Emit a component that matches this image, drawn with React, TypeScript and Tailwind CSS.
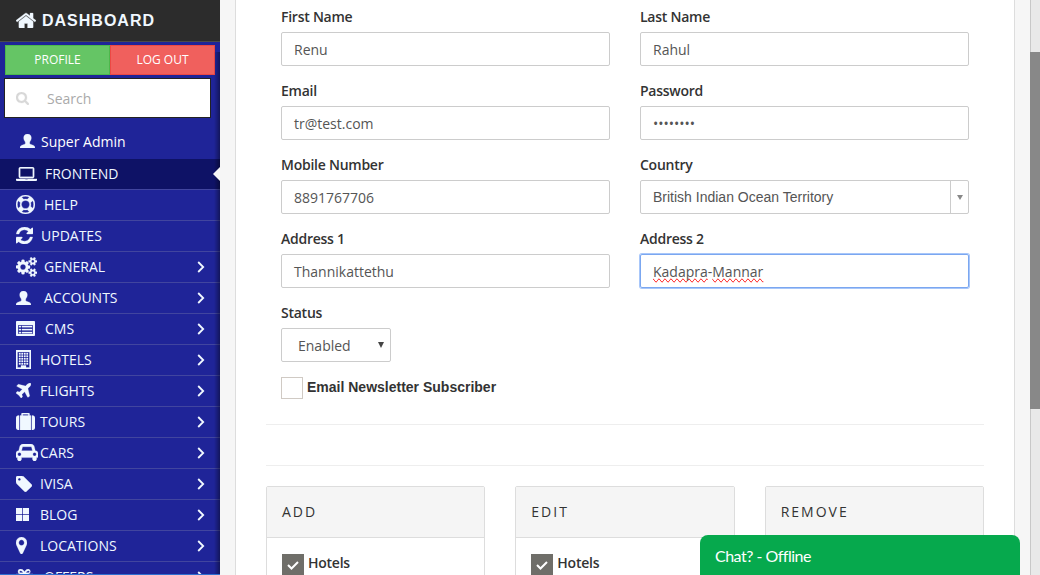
import type { ReactNode } from "react";

type Glyph = { box: string; w: number; h: number; d: string };

const glyphs: Record<string, Glyph> = {
  home: {
    box: "89 160 1614 1376", w: 20, h: 16,
    d: "M1472 992v480q0 26-19 45t-45 19h-384v-384h-256v384h-384q-26 0-45-19t-19-45v-480q0-1 .5-3t.5-3l575-474 575 474q1 2 1 6zm223-69l-62 74q-8 9-21 11h-3q-13 0-21-7l-692-577-692 577q-12 8-24 7-13-2-21-11l-62-74q-8-10-7-23.5t11-21.5l719-599q32-26 76-26t76 26l244 204v-195q0-14 9-23t23-9h192q14 0 23 9t9 23v408l219 182q10 8 11 21.5t-7 23.5z",
  },
  search: {
    box: "64 128 1664 1664", w: 13, h: 13,
    d: "M1216 832q0-185-131.5-316.5t-316.5-131.5-316.5 131.5-131.5 316.5 131.5 316.5 316.5 131.5 316.5-131.5 131.5-316.5zm512 832q0 52-38 90t-90 38q-54 0-90-38l-343-342q-179 124-399 124-143 0-273.5-55.5t-225-150-150-225-55.5-273.5 55.5-273.5 150-225 225-150 273.5-55.5 273.5 55.5 225 150 150 225 55.5 273.5q0 220-124 399l343 343q37 37 37 90z",
  },
  laptop: {
    box: "0 128 1920 1280", w: 21, h: 14,
    d: "M416 1152q-66 0-113-47t-47-113v-704q0-66 47-113t113-47h1088q66 0 113 47t47 113v704q0 66-47 113t-113 47h-1088zm-32-864v704q0 13 9.5 22.5t22.5 9.5h1088q13 0 22.5-9.5t9.5-22.5v-704q0-13-9.5-22.5t-22.5-9.5h-1088q-13 0-22.5 9.5t-9.5 22.5zm1376 928h160v96q0 40-47 68t-113 28h-1600q-66 0-113-28t-47-68v-96h1760zm-720 96q16 0 16-16t-16-16h-160q-16 0-16 16t16 16h160z",
  },
  ring: {
    box: "0 0 1792 1792", w: 19, h: 19,
    d: "M896 0q182 0 348 71t286 191 191 286 71 348-71 348-191 286-286 191-348 71-348-71-286-191-191-286-71-348 71-348 191-286 286-191 348-71zm0 128q-190 0-361 90l194 194q82-28 167-28t167 28l194-194q-171-90-361-90zm-678 1129l194-194q-28-82-28-167t28-167l-194-194q-90 171-90 361t90 361zm678 407q190 0 361-90l-194-194q-82 28-167 28t-167-28l-194 194q171 90 361 90zm0-384q159 0 271.5-112.5t112.5-271.5-112.5-271.5-271.5-112.5-271.5 112.5-112.5 271.5 112.5 271.5 271.5 112.5zm484-217l194 194q90-171 90-361t-90-361l-194 194q28 82 28 167t-28 167z",
  },
  refresh: {
    box: "128 128 1536 1536", w: 17, h: 17,
    d: "M1639 1056q0 5-1 7-64 268-268 434.5t-478 166.5q-146 0-282.5-55t-243.5-157l-129 129q-19 19-45 19t-45-19-19-45v-448q0-26 19-45t45-19h448q26 0 45 19t19 45-19 45l-137 137q71 66 161 102t187 36q134 0 250-65t186-179q11-17 53-117 8-23 30-23h192q13 0 22.5 9.5t9.5 22.5zm25-800v448q0 26-19 45t-45 19h-448q-26 0-45-19t-19-45 19-45l138-138q-148-137-349-137-134 0-250 65t-186 179q-11 17-53 117-8 23-30 23h-199q-13 0-22.5-9.5t-9.5-22.5v-7q65-268 270-434.5t480-166.5q146 0 284 55.5t245 156.5l130-129q19-19 45-19t45 19 19 45z",
  },
  cogs: {
    box: "0 0 1920 1792", w: 21, h: 20,
    d: "M896 896q0-106-75-181t-181-75-181 75-75 181 75 181 181 75 181-75 75-181zm768 512q0-52-38-90t-90-38-90 38-38 90q0 53 37.5 90.5t90.5 37.5 90.5-37.5 37.5-90.5zm0-1024q0-52-38-90t-90-38-90 38-38 90q0 53 37.5 90.5t90.5 37.5 90.5-37.5 37.5-90.5zm-384 421v185q0 10-7 19.5t-16 10.5l-155 24q-11 35-32 76 34 48 90 115 7 11 7 20 0 12-7 19-23 30-82.5 89.5t-78.5 59.5q-11 0-21-7l-115-90q-37 19-77 31-11 108-23 155-7 24-30 24h-186q-11 0-20-7.5t-10-17.5l-23-153q-34-10-75-31l-118 89q-7 7-20 7-11 0-21-8-144-133-144-160 0-9 7-19 10-14 41-53t47-61q-23-44-35-82l-152-24q-10-1-17-9.5t-7-19.5v-185q0-10 7-19.5t16-10.5l155-24q11-35 32-76-34-48-90-115-7-11-7-20 0-12 7-20 22-30 82-89t79-59q11 0 21 7l115 90q34-18 77-32 11-108 23-154 7-24 30-24h186q11 0 20 7.5t10 17.5l23 153q34 10 75 31l118-89q8-7 20-7 11 0 21 8 144 133 144 160 0 8-7 19-12 16-42 54t-45 60q23 48 34 82l152 23q10 2 17 10.5t7 19.5zm640 533v140q0 16-149 31-12 27-30 52 51 113 51 138 0 4-4 7-122 71-124 71-8 0-46-47t-52-68q-20 2-30 2t-30-2q-14 21-52 68t-46 47q-2 0-124-71-4-3-4-7 0-25 51-138-18-25-30-52-149-15-149-31v-140q0-16 149-31 13-29 30-52-51-113-51-138 0-4 4-7 4-2 35-20t59-34 30-16q8 0 46 46.5t52 67.5q20-2 30-2t30 2q51-71 92-112l6-2q4 0 124 70 4 3 4 7 0 25-51 138 17 23 30 52 149 15 149 31zm0-1024v140q0 16-149 31-12 27-30 52 51 113 51 138 0 4-4 7-122 71-124 71-8 0-46-47t-52-68q-20 2-30 2t-30-2q-14 21-52 68t-46 47q-2 0-124-71-4-3-4-7 0-25 51-138-18-25-30-52-149-15-149-31v-140q0-16 149-31 13-29 30-52-51-113-51-138 0-4 4-7 4-2 35-20t59-34 30-16q8 0 46 46.5t52 67.5q20-2 30-2t30 2q51-71 92-112l6-2q4 0 124 70 4 3 4 7 0 25-51 138 17 23 30 52 149 15 149 31z",
  },
  user: {
    box: "0 0 15 14", w: 15, h: 14,
    d: "M7.5 0C9.8 0 11.300 1.6 11.300 3.8C11.300 5.4 10.600 7 9.7 7.9V9.2C9.7 9.8 9.9 10 10.5 10.3L13.6 11.4C14.7 11.9 15 12.6 15 14H0C0 12.6 .3 11.900 1.4 11.4L4.5 10.3C5.1 10 5.3 9.8 5.3 9.2V7.9C4.4 7 3.7 5.4 3.7 3.8C3.7 1.6 5.2 0 7.5 0Z",
  },
  list: {
    box: "0 0 19 15", w: 19, h: 15,
    d: "M1 0H18Q19 0 19 1V14Q19 15 18 15H1Q0 15 0 14V1Q0 0 1 0ZM2 4V13H17V4ZM3 5H5V6.2H3ZM6 5H16V6.2H6ZM3 8H5V9.2H3ZM6 8H16V9.2H6ZM3 11H5V12.2H3ZM6 11H16V12.2H6Z",
  },
  hotel: {
    box: "0 0 15 19", w: 15, h: 19,
    d: "M0 0H15V19H0ZM1.5 2V17.5H5V15.5H10V17.5H13.5V2ZM3 3H4.5V4.5H3ZM5.5 3H7V4.5H5.5ZM8 3H9.5V4.5H8ZM10.5 3H12V4.5H10.5ZM3 5.5H4.5V7H3ZM5.5 5.5H7V7H5.5ZM8 5.5H9.5V7H8ZM10.5 5.5H12V7H10.5ZM3 8H4.5V9.5H3ZM5.5 8H7V9.5H5.5ZM8 8H9.5V9.5H8ZM10.5 8H12V9.5H10.5ZM3 10.5H4.5V12H3ZM5.5 10.5H7V12H5.5ZM8 10.5H9.5V12H8ZM10.5 10.5H12V12H10.5ZM3 13H4.5V14.5H3ZM5.5 13H7V14.5H5.5ZM8 13H9.5V14.5H8ZM10.5 13H12V14.5H10.5Z",
  },
  plane: {
    box: "192 128 1408 1408", w: 15, h: 15,
    d: "M1568 160q44 52 12 148t-108 172l-161 161 160 696q5 19-12 33l-128 96q-7 6-19 6-4 0-7-1-15-3-21-16l-279-508-259 259 53 194q5 17-8 31l-96 96q-9 9-23 9h-2q-15-2-24-13l-189-252-252-189q-11-7-13-23-1-13 9-25l96-97q9-9 23-9 6 0 8 1l194 53 259-259-508-279q-14-8-17-24-2-16 9-27l128-128q14-13 30-8l665 159 160-160q76-76 172-108t148 12z",
  },
  suitcase: {
    box: "0 0 1792 1664", w: 19, h: 17,
    d: "M640 256h512v-128h-512v128zm-352 0v1408h-64q-92 0-158-66t-66-158v-960q0-92 66-158t158-66h64zm1120 0v1408h-1024v-1408h128v-160q0-40 28-68t68-28h576q40 0 68 28t28 68v160h128zm384 224v960q0 92-66 158t-158 66h-64v-1408h64q92 0 158 66t66 158z",
  },
  car: {
    box: "0 128 2048 1600", w: 22, h: 17,
    d: "M480 1088q0-66-47-113t-113-47-113 47-47 113 47 113 113 47 113-47 47-113zm36-320h1016l-89-357q-2-8-14-17.5t-21-9.5h-768q-9 0-21 9.5t-14 17.5zm1372 320q0-66-47-113t-113-47-113 47-47 113 47 113 113 47 113-47 47-113zm160-96v384q0 14-9 23t-23 9h-96v128q0 80-56 136t-136 56-136-56-56-136v-128h-1024v128q0 80-56 136t-136 56-136-56-56-136v-128h-96q-14 0-23-9t-9-23v-384q0-93 65.5-158.5t158.5-65.5h28l105-419q23-94 104-157.5t179-63.5h768q98 0 179 63.5t104 157.5l105 419h28q93 0 158.5 65.5t65.5 158.5z",
  },
  tag: {
    box: "128 128 1516 1516", w: 16, h: 16,
    d: "M576 448q0-53-37.5-90.5t-90.5-37.5-90.5 37.5-37.5 90.5 37.5 90.5 90.5 37.5 90.5-37.5 37.5-90.5zm1067 576q0 53-37 90l-491 492q-39 37-91 37-53 0-90-37l-715-716q-38-37-64.5-101t-26.5-117v-416q0-52 38-90t90-38h416q53 0 117 26.5t102 64.5l715 714q37 39 37 91z",
  },
  tiles: {
    box: "0 0 13 13", w: 13, h: 13,
    d: "M0 0H6V6H0ZM7 0H13V6H7ZM0 7H6V13H0ZM7 7H13V13H7Z",
  },
  pin: {
    box: "384 128 1024 1536", w: 11, h: 17,
    d: "M1152 640q0-106-75-181t-181-75-181 75-75 181 75 181 181 75 181-75 75-181zm256 0q0 109-33 179l-364 774q-16 33-47.5 52t-67.5 19-67.5-19-46.5-52l-365-774q-33-70-33-179 0-212 150-362t362-150 362 150 150 362z",
  },
  gift: {
    box: "0 0 17 16", w: 17, h: 16,
    d: "M4.5 0C6.5 0 7.5 1.3 8.5 2.7C9.5 1.3 10.5 0 12.5 0A2.6 2.6 0 0 1 12.5 5H17V9H16V16H1V9H0V5H4.500A2.500 2.500 0 0 1 4.500 0ZM4.500 1.700A1 1 0 0 0 4.500 3.700H7.200C6.400 2.500 5.500 1.700 4.500 1.700ZM12.500 1.700C11.500 1.700 10.600 2.500 9.800 3.700H12.500A1 1 0 0 0 12.500 1.700Z",
  },
};

function Icon({ name, className = "" }: { name: string; className?: string }) {
  const g = glyphs[name];
  return (
    <svg
      viewBox={g.box}
      width={g.w}
      height={g.h}
      preserveAspectRatio="none"
      className={`shrink-0 fill-current ${className}`}
    >
      <path
        fillRule="evenodd"
        d={g.d}
        className="stroke-current stroke-[0.3px] [vector-effect:non-scaling-stroke]"
      />
    </svg>
  );
}

const menu = [
  { label: "FRONTEND", icon: "laptop", slot: "w-[29px]", active: true },
  { label: "HELP", icon: "ring", slot: "w-[28px]" },
  { label: "UPDATES", icon: "refresh", slot: "w-[25px]" },
  { label: "GENERAL", icon: "cogs", slot: "w-[28px]", more: true },
  { label: "ACCOUNTS", icon: "user", slot: "w-[28px]", more: true },
  { label: "CMS", icon: "list", slot: "w-[29px]", more: true },
  { label: "HOTELS", icon: "hotel", slot: "w-[24px]", more: true },
  { label: "FLIGHTS", icon: "plane", slot: "w-[24px]", more: true },
  { label: "TOURS", icon: "suitcase", slot: "w-[24px]", more: true },
  { label: "CARS", icon: "car", slot: "w-[24px]", more: true },
  { label: "IVISA", icon: "tag", slot: "w-[24px]", more: true },
  { label: "BLOG", icon: "tiles", slot: "w-[24px]", more: true },
  { label: "LOCATIONS", icon: "pin", slot: "w-[24px]", more: true },
  { label: "OFFERS", icon: "gift", slot: "w-[28px]", more: true },
];

function Sidebar() {
  return (
    <aside className="relative flex h-full w-[220px] shrink-0 flex-col overflow-hidden bg-[#1f2498] text-[#f0f8ff]">
      <div className="flex h-[42px] shrink-0 items-center border-b border-[#4a4a4a] bg-[#2c2c2c] pl-4">
        <Icon name="home" className="-mt-px" />
        <span className="ml-[6px] font-['Liberation_Sans'] text-base font-bold tracking-[1px]">DASHBOARD</span>
      </div>
      <div className="mt-[3px] ml-[5px] flex h-[30px] w-[210px] shrink-0 text-center text-[12px] leading-[28px] text-white">
        <div className="w-[105px] border border-[#4cb84c] bg-[#65c565]">PROFILE</div>
        <div className="w-[105px] border border-[#ec4844] bg-[#f0605d]">LOG OUT</div>
      </div>
      <div className="mt-[3px] ml-1 flex h-10 w-[207px] shrink-0 items-center border border-[#222] bg-white pt-px pl-[11px]">
        <Icon name="search" className="text-[#d8d8d8]" />
        <span className="ml-[18px] text-sm text-[#aaa]">Search</span>
      </div>
      <div className="flex h-[41px] shrink-0 items-center pt-[6px] pl-5">
        <Icon name="user" className="-mt-[2px]" />
        <span className="ml-[6px] text-sm text-white">Super Admin</span>
      </div>
      <nav className="flex flex-col">
        {menu.map((m) => (
          <div
            key={m.label}
            className={`flex h-[31px] shrink-0 items-center border-b border-[#41459f] pl-4 ${m.active ? "bg-[#0e1266]" : ""}`}
          >
            <span className={`-mt-px flex ${m.slot}`}>
              <Icon name={m.icon} />
            </span>
            <span className="text-sm">{m.label}</span>
            {m.more && (
              <svg viewBox="0 0 8 12" className="mr-[15px] ml-auto h-3 w-2 fill-none stroke-current stroke-[1.8]">
                <path d="M1.200 1L6.200 6L1.200 11" />
              </svg>
            )}
          </div>
        ))}
      </nav>
      <div className="absolute top-[52px] right-0 bottom-0 w-[6px] bg-gradient-to-r from-transparent to-black/40" />
      <svg viewBox="0 0 7 14" className="absolute top-[167px] right-0 h-[14px] w-[7px] fill-[#f6f6f6]">
        <path d="M7 0L0 7L7 14Z" />
      </svg>
      <div className="absolute bottom-0 left-0 h-px w-full bg-[#2e6fd0]" />
    </aside>
  );
}

function Field({ label, children }: { label: string; children: ReactNode }) {
  return (
    <div className="h-[74px]">
      <div className="h-6 text-sm leading-[17px] font-semibold tracking-[-0.25px] text-[#333]">{label}</div>
      {children}
    </div>
  );
}

function Box({ children }: { children: ReactNode }) {
  return (
    <div className="flex h-[34px] items-center rounded-[2px] border border-[#ccc] px-3 pt-px text-sm text-[#555]">
      {children}
    </div>
  );
}

function Permissions({ title, items }: { title: string; items: string[] }) {
  return (
    <section className="h-[200px] rounded-t-[2px] border border-[#ddd]">
      <h2 className="h-[51px] border-b border-[#ddd] bg-[#f5f5f5] pl-[15px] text-sm leading-[50px] font-medium tracking-[2px] text-[#333]">
        {title}
      </h2>
      {items.map((item) => (
        <div key={item} className="flex pt-4 pl-[15px]">
          <span className="flex h-[22px] w-[22px] items-center justify-center bg-[#6f6e69]">
            <svg viewBox="0 0 12 9" className="h-[9px] w-3 fill-none stroke-white stroke-2">
              <path d="M1 4L4.500 7.500L11 1" />
            </svg>
          </span>
          <span className="ml-1 text-sm leading-[17px] font-semibold tracking-[-0.25px] text-[#333]">{item}</span>
        </div>
      ))}
    </section>
  );
}

export default function App() {
  return (
    <div className="relative flex h-[575px] w-[1040px] overflow-hidden bg-[#f6f6f6] font-['Open_Sans',sans-serif]">
      <Sidebar />
      <main className="ml-[15px] h-full w-[780px] overflow-hidden border-x border-[#ddd] bg-white px-[30px] pt-2">
        <div className="grid grid-cols-2 gap-x-[30px] px-[15px]">
          <Field label="First Name"><Box>Renu</Box></Field>
          <Field label="Last Name"><Box>Rahul</Box></Field>
          <Field label="Email"><Box>tr@test.com</Box></Field>
          <Field label="Password"><Box>••••••••</Box></Field>
          <Field label="Mobile Number"><Box>8891767706</Box></Field>
          <Field label="Country">
            <div className="flex h-[34px] items-center rounded-[2px] border border-[#ccc] pl-3 font-['Liberation_Sans'] text-sm text-[#555]">
              <span className="grow">British Indian Ocean Territory</span>
              <span className="flex h-full w-[18px] items-center justify-center border-l border-[#ccc]">
                <svg viewBox="0 0 6 5" className="h-[5px] w-[6px] fill-[#888]"><path d="M0 0H6L3 5Z" /></svg>
              </span>
            </div>
          </Field>
          <Field label="Address 1"><Box>Thannikattethu</Box></Field>
          <Field label="Address 2">
            <div className="flex h-[34px] items-center rounded-[2px] border border-[#7ba7f0] px-3 pt-px text-sm text-[#555] shadow-[0_0_0_1px_#a8c7fa]">
              <span className="[text-decoration-line:spelling-error]">Kadapra</span>
              <span>-</span>
              <span className="[text-decoration-line:spelling-error]">Mannar</span>
            </div>
          </Field>
          <Field label="Status">
            <div className="flex h-[34px] w-[110px] items-center rounded-[2px] border border-[#ccc] pt-px pr-[6px] pl-4 text-sm text-[#555]">
              <span className="grow">Enabled</span>
              <svg viewBox="0 0 6 6" className="mb-[2px] h-[6px] w-[6px] fill-[#444]"><path d="M0 0H6L3 6Z" /></svg>
            </div>
          </Field>
        </div>
        <div className="flex h-[46px] pl-[15px]">
          <span className="mt-[-1px] h-[22px] w-[22px] border border-[#d0cac4]" />
          <span className="ml-1 font-['Liberation_Sans'] text-sm leading-[18px] font-bold text-[#333]">Email Newsletter Subscriber</span>
        </div>
        <hr className="h-[41px] border-t border-[#eee]" />
        <hr className="h-[21px] border-t border-[#eee]" />
        <div className="grid grid-cols-3 gap-x-[30px]">
          <Permissions title="ADD" items={["Hotels"]} />
          <Permissions title="EDIT" items={["Hotels"]} />
          <Permissions title="REMOVE" items={[]} />
        </div>
      </main>
      <div className="ml-auto flex w-[10px] flex-col border-l border-[#c8c8c8] bg-[#e9e9e9] pt-[52px]">
        <div className="-ml-px h-[357px] w-[10px] bg-[#888]" />
      </div>
      <div className="absolute right-5 bottom-0 h-10 w-[320px] rounded-t-lg bg-[#06a94d] pl-[15px] font-['Lato'] text-base leading-[41px] tracking-[-0.5px] text-white">
        Chat? - Offline
      </div>
    </div>
  );
}
